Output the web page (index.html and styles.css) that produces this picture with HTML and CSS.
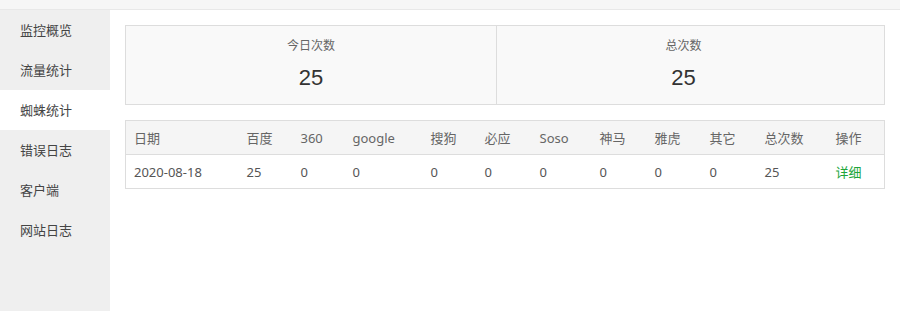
FILE: index.html
```html
<!DOCTYPE html>
<html lang="zh-CN">
<head>
<meta charset="utf-8">
<title>蜘蛛统计</title>
<link rel="stylesheet" href="styles.css">
</head>
<body>
<div class="topbar"></div>
<div class="layout">
  <nav class="sidebar">
    <div class="nav-item">监控概览</div>
    <div class="nav-item">流量统计</div>
    <div class="nav-item active">蜘蛛统计</div>
    <div class="nav-item">错误日志</div>
    <div class="nav-item">客户端</div>
    <div class="nav-item">网站日志</div>
  </nav>
  <main class="main">
    <div class="stats">
      <div class="stat">
        <div class="stat-label">今日次数</div>
        <div class="stat-value">25</div>
      </div>
      <div class="stat stat-right">
        <div class="stat-label">总次数</div>
        <div class="stat-value">25</div>
      </div>
    </div>
    <table class="data">
      <colgroup>
        <col class="c-date"><col class="c-bd"><col class="c-360"><col class="c-google"><col class="c-sg"><col class="c-by"><col class="c-soso"><col class="c-sm"><col class="c-yh"><col class="c-qt"><col class="c-total"><col class="c-op">
      </colgroup>
      <thead>
        <tr><th>日期</th><th>百度</th><th>360</th><th>google</th><th>搜狗</th><th>必应</th><th>Soso</th><th>神马</th><th>雅虎</th><th>其它</th><th>总次数</th><th>操作</th></tr>
      </thead>
      <tbody>
        <tr><td>2020-08-18</td><td>25</td><td>0</td><td>0</td><td>0</td><td>0</td><td>0</td><td>0</td><td>0</td><td>0</td><td>25</td><td><a class="link">详细</a></td></tr>
      </tbody>
    </table>
  </main>
</div>
</body>
</html>
```

FILE: styles.css
```css
* { box-sizing: border-box; }
html, body { margin: 0; padding: 0; height: 100%; }
body {
  font-family: "Noto Sans", "Noto Sans CJK SC", sans-serif;
  font-size: 13px;
  color: #555;
  background: #fff;
  display: flex;
  flex-direction: column;
}
.topbar {
  height: 10px;
  background: #f6f6f6;
  border-bottom: 1px solid #e8e8e8;
  flex: none;
}
.layout {
  display: flex;
  flex: 1;
}
.sidebar {
  width: 110px;
  background: #efefef;
  flex: none;
}
.nav-item {
  height: 40px;
  line-height: 40px;
  padding-left: 20px;
  color: #444;
  font-size: 13px;
}
.nav-item.active { background: #fff; }
.main {
  flex: 1;
  padding: 15px;
}
.stats {
  display: grid;
  grid-template-columns: 370px 1fr;
  border: 1px solid #ddd;
  background: #f9f9f9;
  margin-bottom: 15px;
}
.stat {
  text-align: center;
  padding: 10px 0 11px;
}
.stat-right {
  border-left: 1px solid #ddd;
  padding-right: 14px;
}
.stat-label {
  font-size: 12px;
  line-height: 20px;
  color: #666;
}
.stat-value {
  margin-top: 7px;
  font-size: 22px;
  line-height: 30px;
  color: #333;
  font-family: "Liberation Sans", "Noto Sans", sans-serif;
}
.data {
  width: 100%;
  border-collapse: collapse;
  border: 1px solid #ddd;
  table-layout: fixed;
}
.data th, .data td {
  text-align: left;
  font-weight: normal;
  padding: 0 0 0 8px;
  height: 34px;
  font-size: 13px;
  white-space: nowrap;
}
.data th {
  background: #f5f5f5;
  color: #666;
  border-bottom: 1px solid #ddd;
}
.data td { color: #555; }
.c-date { width: 113px; }
.c-bd { width: 54px; }
.c-360 { width: 52px; }
.c-google { width: 78px; }
.c-sg { width: 54px; }
.c-by { width: 55px; }
.c-soso { width: 60px; }
.c-sm { width: 55px; }
.c-yh { width: 55px; }
.c-qt { width: 55px; }
.c-total { width: 71px; }
.link { color: #20a53a; cursor: pointer; }
```
